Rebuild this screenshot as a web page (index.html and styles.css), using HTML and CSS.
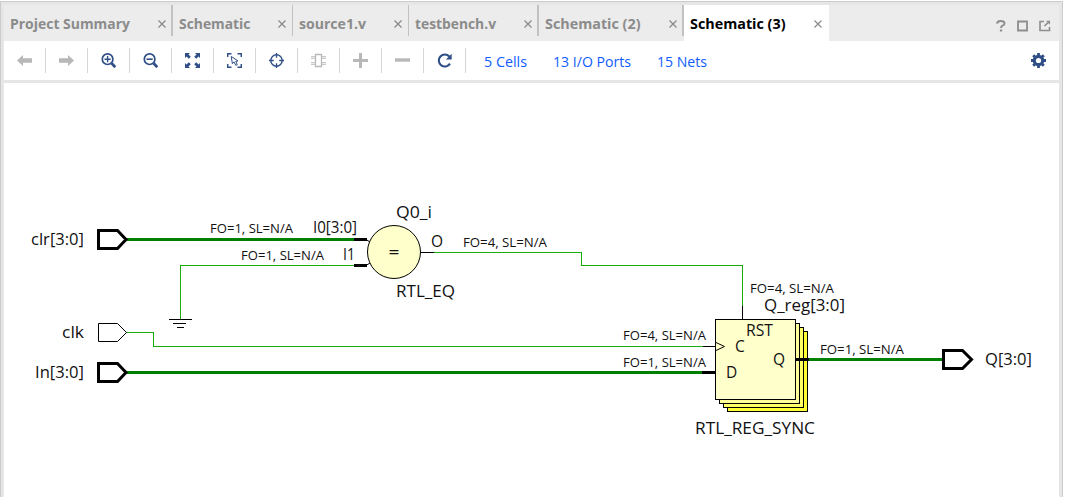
FILE: index.html
```html
<!DOCTYPE html>
<html lang="en">
<head>
<meta charset="utf-8">
<title>Schematic (3)</title>
<link rel="stylesheet" href="styles.css">
</head>
<body>
<div class="frame">
  <header class="tabs">
    <div class="tab tab-summary"><svg class="label" width="120" height="22"><text y="16" textLength="120" lengthAdjust="spacingAndGlyphs">Project Summary</text></svg><svg class="close" viewBox="0 0 8 8"><path d="M.5.5l7 7M7.5.5l-7 7"/></svg></div>
    <div class="tab tab-schematic"><svg class="label" width="72" height="22"><text y="16" textLength="71.5" lengthAdjust="spacingAndGlyphs">Schematic</text></svg><svg class="close" viewBox="0 0 8 8"><path d="M.5.5l7 7M7.5.5l-7 7"/></svg></div>
    <div class="tab tab-source"><svg class="label" width="68" height="22"><text y="16" textLength="67" lengthAdjust="spacingAndGlyphs">source1.v</text></svg><svg class="close" viewBox="0 0 8 8"><path d="M.5.5l7 7M7.5.5l-7 7"/></svg></div>
    <div class="tab tab-bench"><svg class="label" width="82" height="22"><text y="16" textLength="81" lengthAdjust="spacingAndGlyphs">testbench.v</text></svg><svg class="close" viewBox="0 0 8 8"><path d="M.5.5l7 7M7.5.5l-7 7"/></svg></div>
    <div class="tab tab-second"><svg class="label" width="97" height="22"><text x="1" y="16" textLength="95.5" lengthAdjust="spacingAndGlyphs">Schematic (2)</text></svg><svg class="close" viewBox="0 0 8 8"><path d="M.5.5l7 7M7.5.5l-7 7"/></svg></div>
    <div class="tab tab-active"><svg class="label" width="97" height="22"><text y="16" textLength="95.5" lengthAdjust="spacingAndGlyphs">Schematic (3)</text></svg><svg class="close" viewBox="0 0 8 8"><path d="M.5.5l7 7M7.5.5l-7 7"/></svg></div>
    <div class="window-tools">
      <svg width="10" height="12" viewBox="0 0 10 12"><path d="M1 3.6Q1.300 1 4.800 1T8.600 3.500Q8.600 4.800 6.500 5.600 5 6.200 5 8M3.900 10.500H6.200" stroke-width="1.9"/></svg>
      <svg width="11" height="12" viewBox="0 0 11 12"><path d="M1 1.500H10V10.500H1Z" stroke-width="1.8"/></svg>
      <svg width="12" height="12" viewBox="0 0 12 12"><path d="M5 1.500H1V10.500H10.500V7M5.500 6L9 2.600" stroke-width="1.600"/><path d="M7 .8H11V4.800Z" fill="#8d8d8d" stroke="none"/></svg>
    </div>
  </header>
  <nav class="toolbar">
    <div class="tool off"><svg viewBox="0 0 15 15"><path class="solid" d="M0 7.5L6 2V5.3H15V9.7H6V13Z"/></svg></div>
    <div class="tool off"><svg viewBox="0 0 15 15"><path class="solid" d="M15 7.5L9 2V5.3H0V9.7H9V13Z"/></svg></div>
    <div class="tool"><svg viewBox="0 0 15 15"><circle cx="6.6" cy="6.2" r="5.3" stroke-width="1.7"/><path d="M3.5 6.2H9.7M6.6 3.1V9.3" stroke-width="1.4"/><path d="M10.6 10.2L14.3 14.2" stroke-width="2.8"/></svg></div>
    <div class="tool"><svg viewBox="0 0 15 15"><circle cx="6.6" cy="6.2" r="5.3" stroke-width="1.7"/><path d="M3.5 6.2H9.7" stroke-width="1.6"/><path d="M10.6 10.2L14.3 14.2" stroke-width="2.8"/></svg></div>
    <div class="tool"><svg viewBox="0 0 15 15"><path class="solid" d="M0 0H5L3.5 1.5 5.8 3.8 3.8 5.8 1.5 3.5 0 5ZM15 0H10L11.5 1.5 9.2 3.8 11.2 5.8 13.5 3.5 15 5ZM0 15H5L3.5 13.5 5.8 11.2 3.8 9.2 1.5 11.5 0 10ZM15 15H10L11.5 13.5 9.2 11.2 11.2 9.2 13.5 11.5 15 10Z"/></svg></div>
    <div class="tool"><svg viewBox="0 0 15 15"><path d="M.7 4V.7H4.5M10.5.7H14.3V4M.7 11V14.3H4.5M10.5 14.3H14.3V11" stroke-width="1.5"/><path d="M4.2 3.5L5.4 10.7 7 8.9 8.8 12.4 10.3 11.6 8.7 8.3 11 7.9Z" stroke-width="1"/></svg></div>
    <div class="tool"><svg viewBox="0 0 15 15"><circle cx="7.5" cy="7.5" r="5.7" stroke-width="1.4"/><path d="M7.5 0V4.8M7.5 10.2V15M0 7.5H4.8M10.2 7.5H15" stroke-width="1.3"/></svg></div>
    <div class="tool off"><svg viewBox="0 0 15 15"><path d="M4.500 1.500H10.500V13.500H4.500Z" stroke-width="1.300"/><path d="M0 4.500H4M0 10.500H4M11 4.500H15M11 10.500H15" stroke-width="2.600"/><path d="M0 4.500H4M0 10.500H4M11 4.500H15M11 10.500H15" stroke="#fff" stroke-width=".7"/></svg></div>
    <div class="tool off"><svg viewBox="0 0 15 15"><path d="M0 7.5H15M7.5 0V15" stroke-width="3"/></svg></div>
    <div class="tool off"><svg viewBox="0 0 15 15"><path d="M0 7H15" stroke-width="3.4"/></svg></div>
    <div class="tool"><svg viewBox="0 0 15 15"><path d="M12.3 3.5A6 6 0 1 0 13 10.6" stroke-width="2.1"/><path class="solid" d="M14.7.7V6.5H8.9Z"/></svg></div>
    <div class="links">
      <svg class="link" width="44" height="22"><text y="17" textLength="43" lengthAdjust="spacingAndGlyphs">5 Cells</text></svg>
      <svg class="link" width="79" height="22"><text y="17" textLength="78" lengthAdjust="spacingAndGlyphs">13 I/O Ports</text></svg>
      <svg class="link" width="51" height="22"><text y="17" textLength="50" lengthAdjust="spacingAndGlyphs">15 Nets</text></svg>
    </div>
    <div class="settings"><svg viewBox="0 0 15 15"><circle cx="7.5" cy="7.500" r="4.200" stroke-width="3.200"/><path d="M7.500 0V3M7.500 12V15M0 7.500H3M12 7.500H15M2.200 2.200L4 4M11 11L12.800 12.800M2.200 12.800L4 11M11 4L12.800 2.200" stroke-width="2.800"/></svg></div>
  </nav>
  <main class="canvas">
    <svg class="schematic" width="1055" height="414" viewBox="4 83 1055 414">
      <g class="net">
        <path d="M362 265.500H180.500V319M126 332.500H153.500V346.500H704M434 252.500H581.500V265.500H742.500V307"/>
        <path class="bus" d="M126 239.500H355M126 372.500H703M808 359.500H943"/>
      </g>
      <g class="wire">
        <path d="M169 319.500H192M173 323.500H186M177 327.500H184M421 252.500H434M742.500 306V319M703 346.500H716M366 239.500L370 242M366 265.500L370 263"/>
        <path class="bus" d="M354 239.500H367M354 265.500H367M702 372.500H715"/>
        <path d="M98.500 323.500H117.500L126.500 332.500 117.500 341.500H98.500Z"/>
        <path class="bus" d="M98.500 230.500H117.500L126 239.500 117.500 248.500H98.500ZM98.500 363.500H117.500L126 372.500 117.500 381.500H98.500ZM943.500 350.500H962.500L971.500 359.500 962.500 368.500H943.500Z"/>
        <circle cx="394" cy="252" r="26.500" fill="#ffffcc"/>
        <rect x="727.500" y="331.500" width="80" height="80" fill="#ffff33"/>
        <rect x="723.500" y="327.500" width="80" height="80" fill="#ffff66"/>
        <rect x="719.500" y="323.500" width="80" height="80" fill="#ffff99"/>
        <rect x="715.500" y="319.500" width="80" height="80" fill="#ffffcc"/>
        <path d="M716 342.500L724.500 346.500 716 350.500"/>
        <path class="bus" d="M795 359.500H809"/>
      </g>
      <g class="names">
        <text x="31" y="245" textLength="53" lengthAdjust="spacingAndGlyphs">clr[3:0]</text>
        <text x="62" y="338" textLength="22" lengthAdjust="spacingAndGlyphs">clk</text>
        <text x="35" y="378" textLength="49" lengthAdjust="spacingAndGlyphs">In[3:0]</text>
        <text x="396" y="218" textLength="36" lengthAdjust="spacingAndGlyphs">Q0_i</text>
        <text x="396" y="297" textLength="59" lengthAdjust="spacingAndGlyphs">RTL_EQ</text>
        <text x="764" y="311" textLength="81" lengthAdjust="spacingAndGlyphs">Q_reg[3:0]</text>
        <text x="695" y="434" textLength="120" lengthAdjust="spacingAndGlyphs">RTL_REG_SYNC</text>
        <text x="985" y="365" textLength="47" lengthAdjust="spacingAndGlyphs">Q[3:0]</text>
      </g>
      <g class="pins">
        <text x="313" y="233" textLength="44" lengthAdjust="spacingAndGlyphs">I0[3:0]</text>
        <text x="343" y="260" textLength="12" lengthAdjust="spacingAndGlyphs">I1</text>
        <text x="431" y="247">O</text>
        <text x="388.500" y="258" textLength="11" lengthAdjust="spacingAndGlyphs">=</text>
        <text x="746" y="336" textLength="27" lengthAdjust="spacingAndGlyphs">RST</text>
        <text x="735" y="352">C</text>
        <text x="726" y="378">D</text>
        <text x="773" y="365">Q</text>
      </g>
      <g class="loads">
        <text x="210" y="233" textLength="83" lengthAdjust="spacingAndGlyphs">FO=1, SL=N/A</text>
        <text x="241" y="260" textLength="83" lengthAdjust="spacingAndGlyphs">FO=1, SL=N/A</text>
        <text x="463" y="247" textLength="84" lengthAdjust="spacingAndGlyphs">FO=4, SL=N/A</text>
        <text x="750" y="293" textLength="84" lengthAdjust="spacingAndGlyphs">FO=4, SL=N/A</text>
        <text x="623" y="340" textLength="83" lengthAdjust="spacingAndGlyphs">FO=4, SL=N/A</text>
        <text x="623" y="367" textLength="83" lengthAdjust="spacingAndGlyphs">FO=1, SL=N/A</text>
        <text x="820" y="354" textLength="84" lengthAdjust="spacingAndGlyphs">FO=1, SL=N/A</text>
      </g>
    </svg>
  </main>
</div>
</body>
</html>
```
FILE: styles.css
```css
* { box-sizing: border-box; }
body {
  margin: 0;
  padding-top: 1px;
  height: 497px;
  overflow: hidden;
  background: #fff;
  font-family: "Open Sans", "Noto Sans", sans-serif;
}
svg { display: block; flex: none; fill: none; }
.frame {
  width: 1063px;
  height: 496px;
  border: 1px solid #c9cccb;
  border-bottom: 0;
  background: #e6e6e6;
  padding: 3px 3px 0;
}
.tabs { display: flex; height: 36px; background: #ececec; }
.tab {
  display: flex;
  align-items: flex-start;
  justify-content: space-between;
  height: 31px;
  padding: 8px 6px 0;
  border-right: 2px solid #c2c2c2;
}
.tab-summary { width: 169px; }
.tab-schematic { width: 120px; }
.tab-source { width: 116px; }
.tab-bench { width: 130px; }
.tab-second { width: 145px; padding-left: 5px; }
.tab-active { width: 145px; height: 36px; padding-right: 8px; border-right: 0; background: #fff; }
.tab-source, .tab-schematic { padding-right: 7px; border-right-width: 1px; }
.label { overflow: visible; fill: #8b8b8b; font-size: 15px; font-weight: 700; }
.tab-active .label { fill: #000; }
.close { width: 8px; height: 8px; margin-top: 7px; margin-right: -1px; stroke: #888; stroke-width: 1.2; }
.window-tools {
  display: flex;
  gap: 11px;
  margin-left: auto;
  padding: 15px 8px 0 0;
  stroke: #8d8d8d;
}
.toolbar { display: flex; align-items: center; height: 39px; background: #fff; }
.tool {
  display: flex;
  align-items: center;
  justify-content: center;
  width: 42px;
  height: 25px;
  border-right: 1px solid #d6d6d6;
}
.tool svg, .settings svg { width: 15px; height: 15px; stroke: #304f87; }
.tool .solid { fill: #304f87; stroke: none; }
.tool.off svg { stroke: #b8b8b8; }
.tool.off .solid { fill: #b8b8b8; }
.links { display: flex; gap: 25px; padding-left: 18px; }
.link { overflow: visible; fill: #0f5cff; font-size: 15px; }
.settings { margin-left: auto; padding-right: 13px; }
.canvas { height: 414px; margin-top: 3px; background: #fff; }
.net { stroke: #18ac0c; stroke-width: 1; }
.net path { shape-rendering: crispEdges; }
.net .bus { stroke: #008000; stroke-width: 3; }
.wire { stroke: #000; stroke-width: 1; }
.wire .bus { stroke-width: 3; }
.names, .pins, .loads { fill: #111; }
.names { font-size: 17px; }
.pins { font-size: 15.5px; }
.loads { font-size: 12.5px; }
```
